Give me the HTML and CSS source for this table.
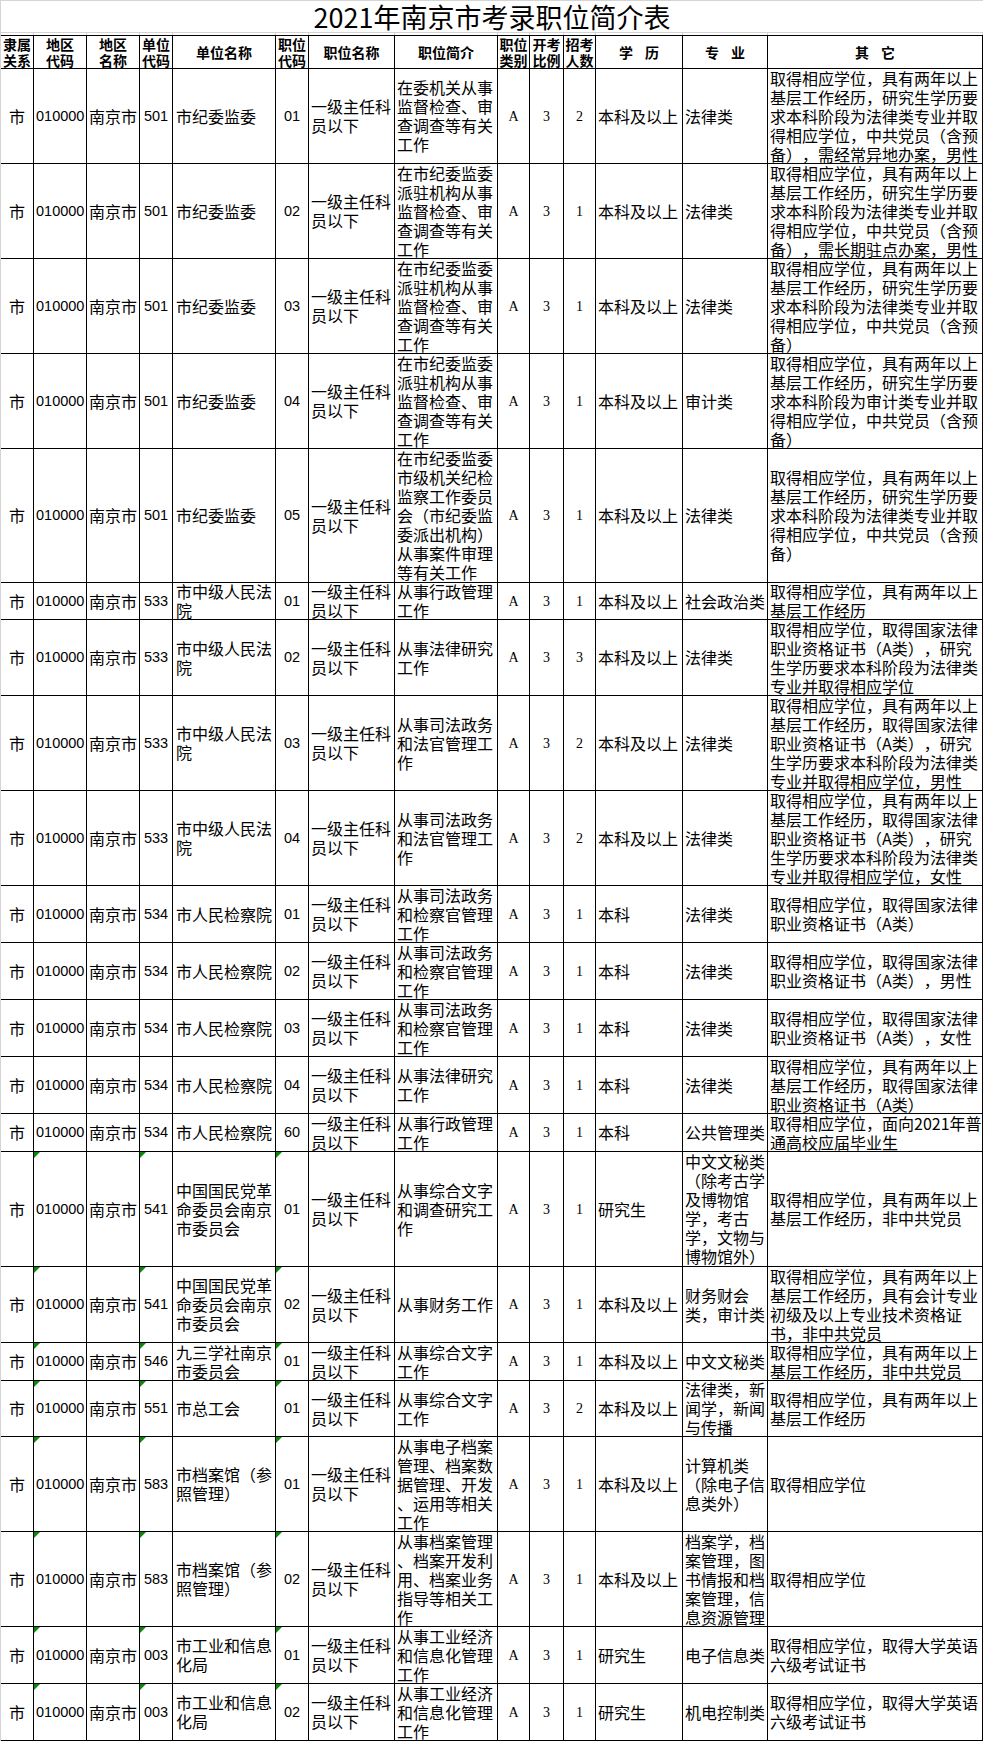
FILE: index.html
```html
<!DOCTYPE html>
<html lang="zh-CN">
<head>
<meta charset="utf-8">
<title>2021年南京市考录职位简介表</title>
<link rel="stylesheet" href="styles.css">
</head>
<body>
<div class="sheet">
  <div class="title">2021年南京市考录职位简介表</div>
  <div class="grid ticks"><span></span><span></span><span></span><span></span><span></span><span></span><span></span><span></span><span></span><span></span><span></span><span></span><span></span><span></span></div>
  <div class="table">
    <div class="grid row head h33">
      <div class="c"><span>隶属<br>关系</span></div>
      <div class="c"><span>地区<br>代码</span></div>
      <div class="c"><span>地区<br>名称</span></div>
      <div class="c"><span>单位<br>代码</span></div>
      <div class="c">单位名称</div>
      <div class="c"><span>职位<br>代码</span></div>
      <div class="c">职位名称</div>
      <div class="c">职位简介</div>
      <div class="c"><span>职位<br>类别</span></div>
      <div class="c"><span>开考<br>比例</span></div>
      <div class="c"><span>招考<br>人数</span></div>
      <div class="c">学<i class="gap"></i>历</div>
      <div class="c">专<i class="gap"></i>业</div>
      <div class="c">其<i class="gap"></i>它</div>
    </div>

    <div class="grid row h95">
      <div class="c ctr">市</div><div class="c num">010000</div><div class="c">南京市</div><div class="c num ctr">501</div>
      <div class="c unit">市纪委监委</div><div class="c num ctr">01</div><div class="c">一级主任科员以下</div>
      <div class="c">在委机关从事监督检查、审查调查等有关工作</div>
      <div class="c ser ctr">A</div><div class="c ser ctr">3</div><div class="c ser ctr">2</div>
      <div class="c">本科及以上</div><div class="c">法律类</div>
      <div class="c">取得相应学位，具有两年以上基层工作经历，研究生学历要求本科阶段为法律类专业并取得相应学位，中共党员（含预备），需经常异地办案，男性</div>
    </div>

    <div class="grid row h95">
      <div class="c ctr">市</div><div class="c num">010000</div><div class="c">南京市</div><div class="c num ctr">501</div>
      <div class="c unit">市纪委监委</div><div class="c num ctr">02</div><div class="c">一级主任科员以下</div>
      <div class="c">在市纪委监委派驻机构从事监督检查、审查调查等有关工作</div>
      <div class="c ser ctr">A</div><div class="c ser ctr">3</div><div class="c ser ctr">1</div>
      <div class="c">本科及以上</div><div class="c">法律类</div>
      <div class="c">取得相应学位，具有两年以上基层工作经历，研究生学历要求本科阶段为法律类专业并取得相应学位，中共党员（含预备），需长期驻点办案，男性</div>
    </div>

    <div class="grid row h95">
      <div class="c ctr">市</div><div class="c num">010000</div><div class="c">南京市</div><div class="c num ctr">501</div>
      <div class="c unit">市纪委监委</div><div class="c num ctr">03</div><div class="c">一级主任科员以下</div>
      <div class="c">在市纪委监委派驻机构从事监督检查、审查调查等有关工作</div>
      <div class="c ser ctr">A</div><div class="c ser ctr">3</div><div class="c ser ctr">1</div>
      <div class="c">本科及以上</div><div class="c">法律类</div>
      <div class="c">取得相应学位，具有两年以上基层工作经历，研究生学历要求本科阶段为法律类专业并取得相应学位，中共党员（含预备）</div>
    </div>

    <div class="grid row h95">
      <div class="c ctr">市</div><div class="c num">010000</div><div class="c">南京市</div><div class="c num ctr">501</div>
      <div class="c unit">市纪委监委</div><div class="c num ctr">04</div><div class="c">一级主任科员以下</div>
      <div class="c">在市纪委监委派驻机构从事监督检查、审查调查等有关工作</div>
      <div class="c ser ctr">A</div><div class="c ser ctr">3</div><div class="c ser ctr">1</div>
      <div class="c">本科及以上</div><div class="c">审计类</div>
      <div class="c">取得相应学位，具有两年以上基层工作经历，研究生学历要求本科阶段为审计类专业并取得相应学位，中共党员（含预备）</div>
    </div>

    <div class="grid row h134">
      <div class="c ctr">市</div><div class="c num">010000</div><div class="c">南京市</div><div class="c num ctr">501</div>
      <div class="c unit">市纪委监委</div><div class="c num ctr">05</div><div class="c">一级主任科员以下</div>
      <div class="c">在市纪委监委市级机关纪检监察工作委员会（市纪委监委派出机构）从事案件审理等有关工作</div>
      <div class="c ser ctr">A</div><div class="c ser ctr">3</div><div class="c ser ctr">1</div>
      <div class="c">本科及以上</div><div class="c">法律类</div>
      <div class="c">取得相应学位，具有两年以上基层工作经历，研究生学历要求本科阶段为法律类专业并取得相应学位，中共党员（含预备）</div>
    </div>

    <div class="grid row h37">
      <div class="c ctr">市</div><div class="c num">010000</div><div class="c">南京市</div><div class="c num ctr">533</div>
      <div class="c unit">市中级人民法院</div><div class="c num ctr">01</div><div class="c">一级主任科员以下</div>
      <div class="c">从事行政管理工作</div>
      <div class="c ser ctr">A</div><div class="c ser ctr">3</div><div class="c ser ctr">1</div>
      <div class="c">本科及以上</div><div class="c">社会政治类</div>
      <div class="c">取得相应学位，具有两年以上基层工作经历</div>
    </div>

    <div class="grid row h76">
      <div class="c ctr">市</div><div class="c num">010000</div><div class="c">南京市</div><div class="c num ctr">533</div>
      <div class="c unit">市中级人民法院</div><div class="c num ctr">02</div><div class="c">一级主任科员以下</div>
      <div class="c">从事法律研究工作</div>
      <div class="c ser ctr">A</div><div class="c ser ctr">3</div><div class="c ser ctr">3</div>
      <div class="c">本科及以上</div><div class="c">法律类</div>
      <div class="c">取得相应学位，取得国家法律职业资格证书（A类），研究生学历要求本科阶段为法律类专业并取得相应学位</div>
    </div>

    <div class="grid row h95">
      <div class="c ctr">市</div><div class="c num">010000</div><div class="c">南京市</div><div class="c num ctr">533</div>
      <div class="c unit">市中级人民法院</div><div class="c num ctr">03</div><div class="c">一级主任科员以下</div>
      <div class="c">从事司法政务和法官管理工作</div>
      <div class="c ser ctr">A</div><div class="c ser ctr">3</div><div class="c ser ctr">2</div>
      <div class="c">本科及以上</div><div class="c">法律类</div>
      <div class="c">取得相应学位，具有两年以上基层工作经历，取得国家法律职业资格证书（A类），研究生学历要求本科阶段为法律类专业并取得相应学位，男性</div>
    </div>

    <div class="grid row h95">
      <div class="c ctr">市</div><div class="c num">010000</div><div class="c">南京市</div><div class="c num ctr">533</div>
      <div class="c unit">市中级人民法院</div><div class="c num ctr">04</div><div class="c">一级主任科员以下</div>
      <div class="c">从事司法政务和法官管理工作</div>
      <div class="c ser ctr">A</div><div class="c ser ctr">3</div><div class="c ser ctr">2</div>
      <div class="c">本科及以上</div><div class="c">法律类</div>
      <div class="c">取得相应学位，具有两年以上基层工作经历，取得国家法律职业资格证书（A类），研究生学历要求本科阶段为法律类专业并取得相应学位，女性</div>
    </div>

    <div class="grid row h57">
      <div class="c ctr">市</div><div class="c num">010000</div><div class="c">南京市</div><div class="c num ctr">534</div>
      <div class="c unit">市人民检察院</div><div class="c num ctr">01</div><div class="c">一级主任科员以下</div>
      <div class="c">从事司法政务和检察官管理工作</div>
      <div class="c ser ctr">A</div><div class="c ser ctr">3</div><div class="c ser ctr">1</div>
      <div class="c">本科</div><div class="c">法律类</div>
      <div class="c">取得相应学位，取得国家法律职业资格证书（A类）</div>
    </div>

    <div class="grid row h57">
      <div class="c ctr">市</div><div class="c num">010000</div><div class="c">南京市</div><div class="c num ctr">534</div>
      <div class="c unit">市人民检察院</div><div class="c num ctr">02</div><div class="c">一级主任科员以下</div>
      <div class="c">从事司法政务和检察官管理工作</div>
      <div class="c ser ctr">A</div><div class="c ser ctr">3</div><div class="c ser ctr">1</div>
      <div class="c">本科</div><div class="c">法律类</div>
      <div class="c">取得相应学位，取得国家法律职业资格证书（A类），男性</div>
    </div>

    <div class="grid row h57">
      <div class="c ctr">市</div><div class="c num">010000</div><div class="c">南京市</div><div class="c num ctr">534</div>
      <div class="c unit">市人民检察院</div><div class="c num ctr">03</div><div class="c">一级主任科员以下</div>
      <div class="c">从事司法政务和检察官管理工作</div>
      <div class="c ser ctr">A</div><div class="c ser ctr">3</div><div class="c ser ctr">1</div>
      <div class="c">本科</div><div class="c">法律类</div>
      <div class="c">取得相应学位，取得国家法律职业资格证书（A类），女性</div>
    </div>

    <div class="grid row h57">
      <div class="c ctr">市</div><div class="c num">010000</div><div class="c">南京市</div><div class="c num ctr">534</div>
      <div class="c unit">市人民检察院</div><div class="c num ctr">04</div><div class="c">一级主任科员以下</div>
      <div class="c">从事法律研究工作</div>
      <div class="c ser ctr">A</div><div class="c ser ctr">3</div><div class="c ser ctr">1</div>
      <div class="c">本科</div><div class="c">法律类</div>
      <div class="c">取得相应学位，具有两年以上基层工作经历，取得国家法律职业资格证书（A类）</div>
    </div>

    <div class="grid row h38">
      <div class="c ctr">市</div><div class="c num">010000</div><div class="c">南京市</div><div class="c num ctr">534</div>
      <div class="c unit">市人民检察院</div><div class="c num ctr">60</div><div class="c">一级主任科员以下</div>
      <div class="c">从事行政管理工作</div>
      <div class="c ser ctr">A</div><div class="c ser ctr">3</div><div class="c ser ctr">1</div>
      <div class="c">本科</div><div class="c">公共管理类</div>
      <div class="c">取得相应学位，面向2021年普通高校应届毕业生</div>
    </div>

    <div class="grid row h115">
      <div class="c ctr">市</div><div class="c num mk">010000</div><div class="c">南京市</div><div class="c num ctr mk">541</div>
      <div class="c unit">中国国民党革命委员会南京市委员会</div><div class="c num ctr mk">01</div><div class="c">一级主任科员以下</div>
      <div class="c">从事综合文字和调查研究工作</div>
      <div class="c ser ctr">A</div><div class="c ser ctr">3</div><div class="c ser ctr">1</div>
      <div class="c">研究生</div><div class="c">中文文秘类（除考古学及博物馆学，考古学，文物与博物馆外）</div>
      <div class="c">取得相应学位，具有两年以上基层工作经历，非中共党员</div>
    </div>

    <div class="grid row h76">
      <div class="c ctr">市</div><div class="c num mk">010000</div><div class="c">南京市</div><div class="c num ctr mk">541</div>
      <div class="c unit">中国国民党革命委员会南京市委员会</div><div class="c num ctr mk">02</div><div class="c">一级主任科员以下</div>
      <div class="c">从事财务工作</div>
      <div class="c ser ctr">A</div><div class="c ser ctr">3</div><div class="c ser ctr">1</div>
      <div class="c">本科及以上</div><div class="c">财务财会类，审计类</div>
      <div class="c">取得相应学位，具有两年以上基层工作经历，具有会计专业初级及以上专业技术资格证书，非中共党员</div>
    </div>

    <div class="grid row h38">
      <div class="c ctr">市</div><div class="c num mk">010000</div><div class="c">南京市</div><div class="c num ctr mk">546</div>
      <div class="c unit">九三学社南京市委员会</div><div class="c num ctr mk">01</div><div class="c">一级主任科员以下</div>
      <div class="c">从事综合文字工作</div>
      <div class="c ser ctr">A</div><div class="c ser ctr">3</div><div class="c ser ctr">1</div>
      <div class="c">本科及以上</div><div class="c">中文文秘类</div>
      <div class="c">取得相应学位，具有两年以上基层工作经历，非中共党员</div>
    </div>

    <div class="grid row h56">
      <div class="c ctr">市</div><div class="c num mk">010000</div><div class="c">南京市</div><div class="c num ctr mk">551</div>
      <div class="c unit">市总工会</div><div class="c num ctr mk">01</div><div class="c">一级主任科员以下</div>
      <div class="c">从事综合文字工作</div>
      <div class="c ser ctr">A</div><div class="c ser ctr">3</div><div class="c ser ctr">2</div>
      <div class="c">本科及以上</div><div class="c">法律类，新闻学，新闻与传播</div>
      <div class="c">取得相应学位，具有两年以上基层工作经历</div>
    </div>

    <div class="grid row h95">
      <div class="c ctr">市</div><div class="c num mk">010000</div><div class="c">南京市</div><div class="c num ctr mk">583</div>
      <div class="c unit">市档案馆（参照管理）</div><div class="c num ctr mk">01</div><div class="c">一级主任科员以下</div>
      <div class="c"><span>从事电子档案管理、档案数据管理、开发<wbr>、运用等相关工作</span></div>
      <div class="c ser ctr">A</div><div class="c ser ctr">3</div><div class="c ser ctr">1</div>
      <div class="c">本科及以上</div><div class="c">计算机类（除电子信息类外）</div>
      <div class="c">取得相应学位</div>
    </div>

    <div class="grid row h95">
      <div class="c ctr">市</div><div class="c num mk">010000</div><div class="c">南京市</div><div class="c num ctr mk">583</div>
      <div class="c unit">市档案馆（参照管理）</div><div class="c num ctr mk">02</div><div class="c">一级主任科员以下</div>
      <div class="c"><span>从事档案管理<wbr>、档案开发利用、档案业务指导等相关工作</span></div>
      <div class="c ser ctr">A</div><div class="c ser ctr">3</div><div class="c ser ctr">1</div>
      <div class="c">本科及以上</div><div class="c">档案学，档案管理，图书情报和档案管理，信息资源管理</div>
      <div class="c">取得相应学位</div>
    </div>

    <div class="grid row h57">
      <div class="c ctr">市</div><div class="c num mk">010000</div><div class="c">南京市</div><div class="c num ctr mk">003</div>
      <div class="c unit">市工业和信息化局</div><div class="c num ctr mk">01</div><div class="c">一级主任科员以下</div>
      <div class="c">从事工业经济和信息化管理工作</div>
      <div class="c ser ctr">A</div><div class="c ser ctr">3</div><div class="c ser ctr">1</div>
      <div class="c">研究生</div><div class="c">电子信息类</div>
      <div class="c">取得相应学位，取得大学英语六级考试证书</div>
    </div>

    <div class="grid row h57">
      <div class="c ctr">市</div><div class="c num mk">010000</div><div class="c">南京市</div><div class="c num ctr mk">003</div>
      <div class="c unit">市工业和信息化局</div><div class="c num ctr mk">02</div><div class="c">一级主任科员以下</div>
      <div class="c">从事工业经济和信息化管理工作</div>
      <div class="c ser ctr">A</div><div class="c ser ctr">3</div><div class="c ser ctr">1</div>
      <div class="c">研究生</div><div class="c">机电控制类</div>
      <div class="c">取得相应学位，取得大学英语六级考试证书</div>
    </div>
  </div>
</div>
</body>
</html>
```

FILE: styles.css
```css
html, body {
  margin: 0;
  padding: 0;
  background: #fff;
}

.sheet {
  width: 983px;
  box-sizing: border-box;
  border-left: 1px solid #d4d4d4;
  font-family: "Noto Sans CJK SC", sans-serif;
  color: #000;
  background: #fff;
  text-spacing-trim: space-all;
}

.title {
  height: 33px;
  box-sizing: border-box;
  border-top: 1px solid #d4d4d4;
  border-bottom: 1px solid #d4d4d4;
  display: flex;
  align-items: center;
  justify-content: center;
  font-size: 27px;
  line-height: 31px;
  white-space: nowrap;
}

.grid {
  display: grid;
  grid-template-columns: 33px 53px 53px 33px 103px 33px 86px 103px 32px 34px 32px 87px 85px 215px;
}

.ticks {
  height: 2px;
}

.ticks span {
  border-right: 1px solid #d4d4d4;
}

.table {
  border-top: 1px solid #000;
}

.row {
  box-sizing: border-box;
  border-bottom: 1px solid #000;
}

.c {
  position: relative;
  box-sizing: border-box;
  border-right: 1px solid #000;
  overflow: hidden;
  display: flex;
  align-items: center;
  padding-left: 2px;
  font-size: 16px;
  line-height: 19px;
}

.head .c {
  font-size: 14px;
  line-height: 16px;
  font-weight: 700;
  justify-content: center;
  text-align: center;
  padding-left: 0;
}

.gap {
  display: inline-block;
  width: 12px;
}

.ctr {
  justify-content: center;
  text-align: center;
  padding-left: 0;
}

.unit {
  padding-left: 3px;
}

.num {
  font-family: "Liberation Sans", sans-serif;
  font-size: 14.5px;
}

.ser {
  font-family: "Liberation Serif", serif;
  font-size: 14px;
}

.mk::before {
  content: "";
  position: absolute;
  left: 0;
  top: 0;
  border-top: 6px solid #078a07;
  border-right: 6px solid transparent;
}

.h33 { height: 33px; }
.h37 { height: 37px; }
.h38 { height: 38px; }
.h56 { height: 56px; }
.h57 { height: 57px; }
.h76 { height: 76px; }
.h95 { height: 95px; }
.h115 { height: 115px; }
.h134 { height: 134px; }
```
